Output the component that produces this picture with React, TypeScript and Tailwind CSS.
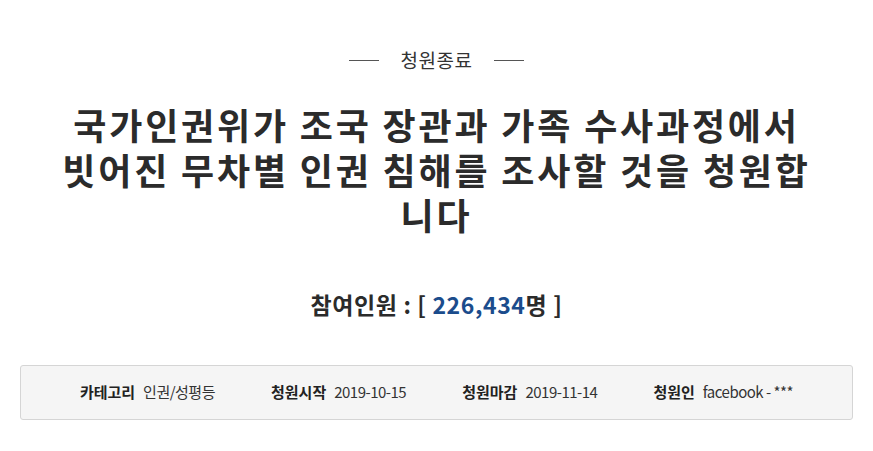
import React from 'react';

const info = [
  { label: '카테고리', value: '인권/성평등' },
  { label: '청원시작', value: '2019-10-15' },
  { label: '청원마감', value: '2019-11-14' },
  { label: '청원인', value: 'facebook - ***' },
];

const App: React.FC = () => {
  return (
    <div
      className="min-h-screen bg-white text-[#333] pt-[48px]"
      style={{ fontFamily: '"Noto Sans CJK KR", "Noto Sans", sans-serif' }}
    >
      <div className="flex items-center justify-center h-6">
        <span className="w-[30px] h-px bg-[#555]" />
        <span className="mx-[22px] text-[19px] leading-6 tracking-[0.5px] text-[#333]">청원종료</span>
        <span className="w-[30px] h-px bg-[#555]" />
      </div>

      <h1 className="mt-[30px] w-[750px] mx-auto text-center text-[36px] leading-[45px] tracking-[2.8px] font-bold text-[#2b2b2b]">
        국가인권위가 조국 장관과 가족 수사과정에서 빗어진 무차별 인권 침해를 조사할 것을 청원합니다
      </h1>

      <div className="mt-[52px] text-center text-[23px] leading-[30px] tracking-[0.6px] font-bold text-[#2b2b2b]">
        참여인원 : [ <span className="text-[#1b4c8c]">226,434</span>명 ]
      </div>

      <div className="mx-[20px] mt-[46px] h-[55px] bg-[#f5f5f5] border border-[#d5d5d5] rounded-[3px] flex items-center justify-center gap-[56px]">
        {info.map((item) => (
          <div key={item.label} className="flex items-center gap-2">
            <span className="font-bold text-[15px] text-[#222]">{item.label}</span>
            <span className="text-[15px] tracking-[-0.5px] text-[#333]">{item.value}</span>
          </div>
        ))}
      </div>
    </div>
  );
};

export default App;
